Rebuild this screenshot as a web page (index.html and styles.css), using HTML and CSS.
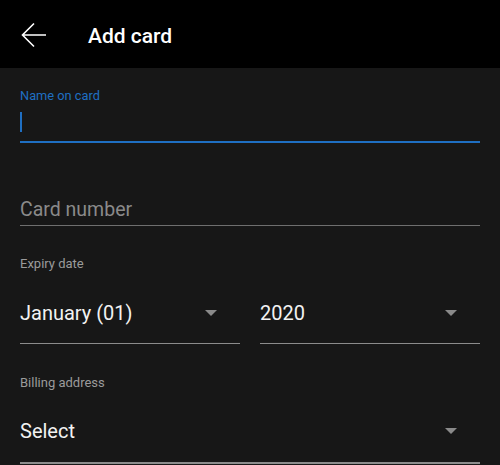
FILE: index.html
```html
<!DOCTYPE html>
<html lang="en">
<head>
<meta charset="utf-8">
<title>Add card</title>
<link rel="stylesheet" href="styles.css">
</head>
<body>
<header class="appbar">
  <svg class="back" width="26" height="26" viewBox="0 0 26 26" aria-hidden="true">
    <path d="M25 13H2M13 1.5L1.5 13L13 24.5" fill="none" stroke="#fff" stroke-width="1.6"/>
  </svg>
  <h1 class="title">Add card</h1>
</header>
<main class="form">
  <div class="field field-name">
    <label class="label label-active">Name on card</label>
    <div class="input input-active"><span class="caret"></span></div>
  </div>
  <div class="field field-number">
    <div class="input input-text"><span class="placeholder">Card number</span></div>
  </div>
  <div class="field field-expiry">
    <label class="label">Expiry date</label>
    <div class="row">
      <div class="select"><span class="value">January (01)</span><span class="tri"></span></div>
      <div class="select"><span class="value">2020</span><span class="tri"></span></div>
    </div>
  </div>
  <div class="field field-billing">
    <label class="label">Billing address</label>
    <div class="select select-last"><span class="value">Select</span><span class="tri"></span></div>
  </div>
</main>
</body>
</html>
```
FILE: styles.css
```css
html, body {
  margin: 0;
  padding: 0;
  background: #171717;
  font-family: Roboto, "Liberation Sans", sans-serif;
  width: 500px;
  height: 465px;
  overflow: hidden;
}
.appbar {
  height: 68px;
  background: #000;
  display: flex;
  align-items: center;
  padding-left: 21px;
}
.back {
  display: block;
  margin-top: 2px;
}
.title {
  margin: 3px 0 0 41px;
  color: #fff;
  font-size: 21px;
  font-weight: 500;
  line-height: 24px;
}
.form {
  padding: 0 20px;
  display: flex;
  flex-direction: column;
}
.label {
  display: block;
  font-size: 13px;
  line-height: 16px;
  color: #9b9b9b;
}
.label-active {
  color: #1f6fc2;
  font-size: 12.8px;
}
.field-name { margin-top: 20px; }
.input-active {
  height: 37px;
  border-bottom: 2px solid #1f6fc2;
  display: flex;
  align-items: flex-start;
}
.caret {
  width: 2px;
  height: 20px;
  margin-top: 8px;
  background: #1f6fc2;
}
.field-number { margin-top: 55px; }
.input-text {
  border-bottom: 1px solid #6f6f6f;
  padding-bottom: 3px;
}
.placeholder {
  display: block;
  font-size: 19.5px;
  line-height: 24px;
  color: #8a8a8a;
}
.field-expiry { margin-top: 30px; }
.row {
  display: flex;
  gap: 20px;
  margin-top: 29px;
}
.select {
  flex: 1;
  display: flex;
  align-items: center;
  justify-content: space-between;
  border-bottom: 1px solid #8c8c8c;
  padding-bottom: 18px;
}
.value {
  font-size: 20px;
  line-height: 24px;
  color: #f2f2f2;
}
.tri {
  width: 0;
  height: 0;
  border-left: 6px solid transparent;
  border-right: 6px solid transparent;
  border-top: 6px solid #8a8a8a;
  margin-right: 23px;
  margin-top: -1px;
}
.field-billing { margin-top: 31px; }
.select-last {
  margin-top: 28px;
  padding-bottom: 19px;
  border-bottom: 2px solid #8c8c8c;
}
```
